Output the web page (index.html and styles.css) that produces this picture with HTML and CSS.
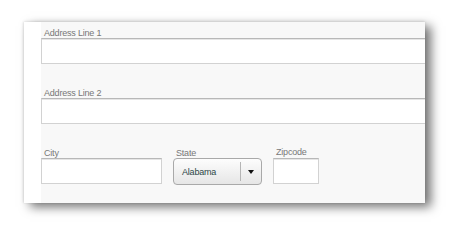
FILE: index.html
```html
<!DOCTYPE html>
<html lang="en">
<head>
  <meta charset="UTF-8">
  <title>Address form</title>
  <link rel="stylesheet" href="styles.css">
</head>
<body>
  <div class="page">
    <div class="card">
      <div class="strip"></div>
      <form class="form">
        <div class="field">
          <label class="label">Address Line 1</label>
          <input class="input wide" type="text">
        </div>
        <div class="field">
          <label class="label">Address Line 2</label>
          <input class="input wide" type="text">
        </div>
        <div class="row">
          <div class="field">
            <label class="label">City</label>
            <input class="input city" type="text">
          </div>
          <div class="field">
            <label class="label">State</label>
            <div class="select">
              <span class="select-value">Alabama</span>
              <span class="select-arrow">
                <svg width="6" height="4" viewBox="0 0 6 4"><path d="M0 0h6L3 4z" fill="#111"/></svg>
              </span>
            </div>
          </div>
          <div class="field">
            <label class="label zip-label">Zipcode</label>
            <input class="input zip" type="text">
          </div>
        </div>
      </form>
    </div>
  </div>
</body>
</html>
```

FILE: styles.css
```css
body { margin: 0; background: #fff; font-family: "Liberation Sans", Arial, sans-serif; }
.page { box-sizing: border-box; height: 241px; padding: 22px 0 0 24px; }
.card { display: flex; width: 401px; height: 181px; background: #f8f8f8; box-shadow: 6px 4px 10px rgba(0,0,0,0.55), 0 -1px 3px rgba(0,0,0,0.08), -1px 0 2px rgba(0,0,0,0.08); overflow: hidden; }
.strip { width: 17px; background: #fff; flex: none; }
.form { flex: 1; padding-top: 6px; display: flex; flex-direction: column; gap: 24px; }
.field { display: flex; flex-direction: column; }
.label { font-size: 9px; line-height: 10px; height: 10px; color: #777; padding-left: 3px; letter-spacing: -0.2px; }
.zip-label { margin-top: -1px; margin-bottom: 1px; }
.input { box-sizing: border-box; height: 26px; margin: 0; padding: 0; background: #fff; border: 1px solid #d2d2d2; border-top-color: #b8b8b8; box-shadow: inset 0 1px 0 #e6e6e6; outline: none; }
.wide { width: 400px; }
.row { display: flex; gap: 11px; }
.city { width: 121px; }
.zip { width: 46px; }
.select { box-sizing: border-box; width: 89px; height: 27px; display: flex; align-items: center; border: 1px solid #a9a9a9; border-radius: 4px; background: linear-gradient(#fdfdfd, #e6e6e6); }
.select-value { flex: 1; font-size: 9px; color: #2c4646; padding-left: 8px; letter-spacing: -0.2px; }
.select-arrow { width: 20px; height: 19px; border-left: 1px solid #b5b5b5; display: flex; align-items: center; justify-content: center; }
```
